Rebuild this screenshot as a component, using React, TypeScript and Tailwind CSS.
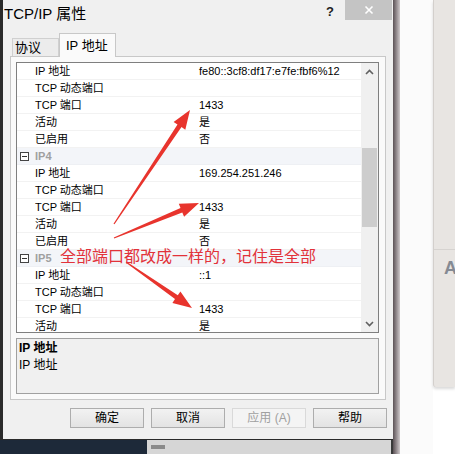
import React from "react";

type Row = { label?: string; value?: string; cat?: string };

const rows: Row[] = [
  { label: "IP 地址", value: "fe80::3cf8:df17:e7fe:fbf6%12" },
  { label: "TCP 动态端口", value: "" },
  { label: "TCP 端口", value: "1433" },
  { label: "活动", value: "是" },
  { label: "已启用", value: "否" },
  { cat: "IP4" },
  { label: "IP 地址", value: "169.254.251.246" },
  { label: "TCP 动态端口", value: "" },
  { label: "TCP 端口", value: "1433" },
  { label: "活动", value: "是" },
  { label: "已启用", value: "否" },
  { cat: "IP5" },
  { label: "IP 地址", value: "::1" },
  { label: "TCP 动态端口", value: "" },
  { label: "TCP 端口", value: "1433" },
  { label: "活动", value: "是" },
];

function arrowPoints(sx: number, sy: number, tx: number, ty: number) {
  const dx = tx - sx;
  const dy = ty - sy;
  const len = Math.sqrt(dx * dx + dy * dy);
  const ux = dx / len;
  const uy = dy / len;
  const nx = -uy;
  const ny = ux;
  const headLen = 19;
  const headW = 7;
  const shaftStart = 0.6;
  const shaftEnd = 2.4;
  const bx = tx - ux * headLen;
  const by = ty - uy * headLen;
  const pts: [number, number][] = [
    [sx + nx * shaftStart, sy + ny * shaftStart],
    [bx + nx * shaftEnd, by + ny * shaftEnd],
    [bx + nx * headW, by + ny * headW],
    [tx, ty],
    [bx - nx * headW, by - ny * headW],
    [bx - nx * shaftEnd, by - ny * shaftEnd],
    [sx - nx * shaftStart, sy - ny * shaftStart],
  ];
  return pts.map((p) => `${p[0].toFixed(1)},${p[1].toFixed(1)}`).join(" ");
}

function ChevronUp() {
  return (
    <svg width="9" height="6" viewBox="0 0 9 6">
      <path d="M1 5 L4.5 1.5 L8 5" fill="none" stroke="#606060" strokeWidth="1.6" />
    </svg>
  );
}

function ChevronDown() {
  return (
    <svg width="9" height="6" viewBox="0 0 9 6">
      <path d="M1 1 L4.5 4.5 L8 1" fill="none" stroke="#606060" strokeWidth="1.6" />
    </svg>
  );
}

function Btn({ children, disabled }: { children: React.ReactNode; disabled?: boolean }) {
  return (
    <div
      className={
        disabled
          ? "w-[74px] h-[20px] flex items-center justify-center border border-[#d9d9d9] bg-[#f4f4f4] text-[#a0a0a0] text-[12px]"
          : "w-[74px] h-[20px] flex items-center justify-center border border-[#adadad] bg-gradient-to-b from-[#f2f2f2] to-[#e3e3e3] text-black text-[12px]"
      }
    >
      {children}
    </div>
  );
}

export default function App() {
  const font = "font-['Liberation_Sans','Noto_Sans_CJK_SC',sans-serif]";
  return (
    <div className={`relative w-[455px] h-[454px] overflow-hidden bg-white ${font}`}>
      <div className="flex h-full">
        {/* Dialog column */}
        <div className="flex flex-col w-[393px]">
          <div className="w-[393px] h-[440px] bg-[#f0f0f0] border-l-[3px] border-b border-[#2a2a2a] flex flex-col">
            {/* Title bar */}
            <div className="h-[30px] flex items-start">
              <div className="flex-1 pl-[1px] pt-[4px] text-[15px] leading-[20px] text-black">TCP/IP 属性</div>
              <div className="pt-[2px] mr-[11px] text-[13px] font-bold text-[#222]">?</div>
              <div className="w-[47px] h-[20px] bg-[#c4c4c4] flex items-center justify-center mr-[1px]">
                <svg width="10" height="10" viewBox="0 0 10 10">
                  <path d="M1.5 1.5 L8.5 8.5 M8.5 1.5 L1.5 8.5" stroke="#ffffff" strokeWidth="1.6" />
                </svg>
              </div>
            </div>
            {/* Tabs */}
            <div className="mt-[4px] h-[22px] flex items-end pl-[9px]">
              <div className="h-[18px] w-[47px] border border-b-0 border-[#d0d0d0] bg-[#ececec] flex items-center pl-[2px] text-[13px] leading-[16px] text-black">
                协议
              </div>
              <div className="relative z-10 mb-[-1px] h-[24px] w-[57px] border border-b-0 border-[#c8c8c8] bg-[#fafafa] flex items-center pl-[6px] text-[13px] text-black">
                IP 地址
              </div>
            </div>
            {/* Tab panel */}
            <div className="ml-[7px] w-[376px] h-[344px] border border-[#c8c8c8] bg-[#fafafa] pl-[5px] pt-[5px]">
              {/* Property grid */}
              <div className="w-[363px] h-[271px] border border-[#7f7f7f] bg-white flex">
                <div className="flex-1 overflow-hidden flex flex-col">
                  {rows.map((r, i) =>
                    r.cat ? (
                      <div key={i} className="h-[17px] shrink-0 flex items-center bg-[#f3f5f9] border-b border-[#eef0f4]">
                        <div className="w-[18px] pl-[3px] flex items-center">
                          <div className="w-[9px] h-[9px] border border-[#444] flex items-center justify-center bg-white">
                            <div className="w-[5px] h-[1px] bg-[#333]" />
                          </div>
                        </div>
                        <div className="text-[11px] font-bold text-[#a0a0a0]">{r.cat}</div>
                      </div>
                    ) : (
                      <div key={i} className="h-[17px] shrink-0 flex items-center border-b border-[#f2f2f2] text-[11px] text-black">
                        <div className="w-[182px] pl-[18px] whitespace-nowrap">{r.label}</div>
                        <div className="whitespace-nowrap">{r.value}</div>
                      </div>
                    )
                  )}
                </div>
                {/* Scrollbar */}
                <div className="w-[17px] bg-[#f0f0f0] flex flex-col items-center">
                  <div className="h-[17px] flex items-center justify-center">
                    <ChevronUp />
                  </div>
                  <div className="flex-1 w-full flex flex-col">
                    <div className="h-[68px]" />
                    <div className="h-[79px] mx-[1px] bg-[#cdcdcd]" />
                  </div>
                  <div className="h-[17px] flex items-center justify-center">
                    <ChevronDown />
                  </div>
                </div>
              </div>
              {/* Description */}
              <div className="mt-[5px] w-[363px] h-[56px] border border-[#a0a0a0] bg-[#f0f0f0] pl-[2px] pt-[1px]">
                <div className="text-[12px] leading-[17px] font-bold text-black">IP 地址</div>
                <div className="text-[12px] leading-[17px] text-black">IP 地址</div>
              </div>
            </div>
            {/* Buttons */}
            <div className="mt-[8px] flex gap-[7px] pl-[67px]">
              <Btn>确定</Btn>
              <Btn>取消</Btn>
              <Btn disabled>应用 (A)</Btn>
              <Btn>帮助</Btn>
            </div>
          </div>
          {/* Below dialog */}
          <div className="flex-1 flex">
            <div className="w-[147px] bg-[#1d2939]" />
            <div className="flex-1 bg-[#d6d6d6] border-r-[2px] border-[#3a3a3a] flex items-start pt-[5px] pl-[4px]">
              <div className="w-[14px] h-[4px] bg-[#8a8a8a]" />
            </div>
          </div>
        </div>
        {/* Shadow */}
        <div className="w-[7px] bg-gradient-to-r from-[#5c5256] to-[#cfc9cb]" />
        {/* Background */}
        <div className="w-[33px] bg-[#fbfbfb]" />
        <div className="w-[22px] h-[387px] bg-[#e8e5e2] border-l border-[#d3cfcc] rounded-bl-[3px] shadow-[0_2px_3px_rgba(0,0,0,0.15)] flex flex-col">
          <div className="h-[250px] border-b border-[#d6d3d0]" />
          <div className="pl-[10px] pt-[8px] text-[18px] font-bold leading-[20px] text-[#858a93]">A</div>
        </div>
      </div>

      {/* Annotation overlay */}
      <svg className="absolute left-0 top-0" width="455" height="454" viewBox="0 0 455 454">
        <polygon points={arrowPoints(114, 224, 190, 110)} fill="#e8342d" />
        <polygon points={arrowPoints(114, 238, 199, 203)} fill="#e8342d" />
        <polygon points={arrowPoints(126, 262, 192, 308)} fill="#e8342d" />
      </svg>
      <div className="absolute left-[60px] top-[245px] text-[16px] leading-[20px] text-[#e2323a] whitespace-nowrap font-['Noto_Sans_CJK_SC',sans-serif]">
        全部端口都改成一样的，记住是全部
      </div>
    </div>
  );
}
